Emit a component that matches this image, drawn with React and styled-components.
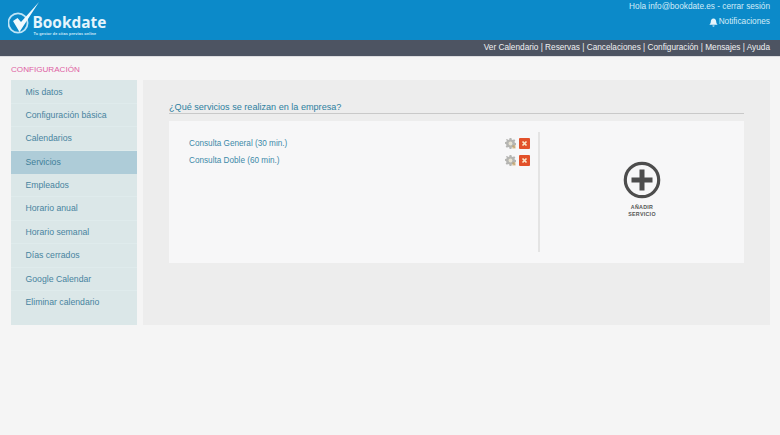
import React from "react";
import styled, { createGlobalStyle } from "styled-components";

const Global = createGlobalStyle`
  html, body { margin: 0; padding: 0; background: #f5f5f5; }
  body { font-family: "Liberation Sans", Arial, sans-serif; }
  * { box-sizing: border-box; }
`;
const Page = styled.div`width: 780px; height: 435px; overflow: hidden; background: #f5f5f5;`;
const TopBar = styled.header`
  height: 40px; background: #0c8ac9; display: flex; justify-content: space-between;
  padding: 0 10px 0 8px;
`;
const Logo = styled.div`display: flex; align-items: flex-start; position: relative; width: 110px;`;
const LogoMark = styled.svg`width: 36px; height: 36px; flex: none; margin-top: 0;`;
const LogoText = styled.div`
  position: absolute; left: 24.5px; top: 14px; display: flex; flex-direction: column; color: #eaf6fc;
`;
const LogoName = styled.span`font: 700 15.4px/18px "Open Sans", sans-serif; letter-spacing: 0; color: #e6f5fc;`;
const LogoTag = styled.span`
  font: bold 3.8px/4px "Liberation Sans", sans-serif; margin: 0 0 0 1px; white-space: nowrap; color: #d5edf9; letter-spacing: .12px;
`;
const UserBox = styled.div`
  display: flex; flex-direction: column; align-items: flex-end; color: #d3ecf8; font-size: 8.25px; padding-top: 2px; gap: 5px;
`;
const UserLine = styled.div`line-height: 10px; display: flex; align-items: center; gap: 1px;`;
const NavBar = styled.nav`
  height: 17px; background: #4d5462; color: #f0f1f3; font-size: 8.25px; line-height: 16px; text-align: right;
  padding-right: 10px; border-bottom: 1px solid #dcdde0;
`;
const SectionTitle = styled.h1`
  margin: 0; padding: 7px 0 0 11px; height: 23px; font: normal 8.1px/11px "Liberation Sans", sans-serif; color: #df5fa3;
`;
const Content = styled.div`display: flex; gap: 6px; padding: 0 10px 0 11px; height: 245px;`;
const Sidebar = styled.aside`width: 126px; background: #dbe7e8; padding-top: 0.5px;`;
const MenuItem = styled.div`
  height: 23.4px; line-height: 23px; padding-left: 14.5px; font-size: 8.7px;
  color: ${p => p.$active ? "#3f8099" : "#48849f"};
  background: ${p => p.$active ? "#aeccd8" : "transparent"};
  border-bottom: 1px solid ${p => p.$active ? "#aeccd8" : "#dfebec"};
  &:last-child { border-bottom: none; }
`;
const Main = styled.main`flex: 1; background: #ededed; padding: 20px 26px 0;`;
const Question = styled.h2`
  margin: 0 0 7px; height: 13px; font: normal 9.1px/14px "Liberation Sans", sans-serif; color: #2e7f9f;
  border-bottom: 1px solid #c9c9c9; box-sizing: content-box;
`;
const Card = styled.section`
  height: 142px; background: #f7f7f8; padding: 11px 0 0 20px; display: flex;
`;
const List = styled.div`width: 351px; height: 120px; border-right: 2px solid #e4e4e4; padding-top: 2.5px; flex: none;`;
const ServiceRow = styled.div`
  height: 17.5px; display: flex; align-items: center; justify-content: space-between; padding-right: 8px;
  font-size: 8.2px; color: #3d8aa8;
`;
const Icons = styled.div`display: flex; align-items: center; gap: 3px;`;
const AddBox = styled.div`flex: 1; display: flex; flex-direction: column; align-items: center; padding-top: 29px;`;
const AddLabel = styled.div`
  margin-top: 5px; font: bold 5.3px/7px "Liberation Sans", sans-serif; color: #555; text-align: center; letter-spacing: .3px;
`;

const Gear = () => (
  <svg width="11" height="11" viewBox="0 0 12 12">
    <path fill="#b5b5b2" d="M5 0h2l.3 1.7 1.2.5L10 1.3l1.3 1.4-1 1.4.5 1.2 1.7.3v2l-1.7.3-.5 1.2 1 1.4L10 10.7l-1.5-.9-1.2.5L7 12H5l-.3-1.7-1.2-.5-1.5.9L.7 9.3l1-1.4-.5-1.2L0 6.4v-2l1.5-.3.5-1.2-1-1.400L2.300 1 3.500 2.200 4.700 1.700z" />
    <circle cx="6" cy="6" r="2.100" fill="#e6e2d2" />
    <path fill="#c79a4a" d="M8 8h3.500v3.500H8z" opacity=".55" />
  </svg>
);
const Del = () => (
  <svg width="11" height="11" viewBox="0 0 11 11">
    <rect width="11" height="11" rx="1" fill="#e2512a" />
    <path d="M3.500 3.500l4 4m0-4l-4 4" stroke="#fbe6c8" strokeWidth="1.700" />
  </svg>
);
const Bell = () => (
  <svg width="9" height="9" viewBox="0 0 10 10">
    <path fill="#e6f5fc" d="M5 .5c2 0 3 1.500 3 3.500 0 1.800.8 2.600 1.500 3.500h-9C1.200 6.600 2 5.800 2 4 2 2 3 .5 5 .5zM3.800 8.300h2.400C6.100 9.200 5.600 9.600 5 9.600s-1.100-.4-1.200-1.300z" />
  </svg>
);
const items = ["Mis datos","Configuración básica","Calendarios","Servicios","Empleados","Horario anual","Horario semanal","Días cerrados","Google Calendar","Eliminar calendario"];

export default function App() {
  return (
    <Page>
      <Global />
      <TopBar>
        <Logo>
          <LogoMark viewBox="0 0 36 36">
            <circle cx="10" cy="23" r="9.600" fill="none" stroke="#bfe4f6" strokeWidth="1.800" />
            <path d="M5 21l6.500 11L31 2 13 22l-3.500-4z" fill="#f2fafe" />
          </LogoMark>
          <LogoText>
            <LogoName>Bookdate</LogoName>
            <LogoTag>Tu gestor de citas previas online</LogoTag>
          </LogoText>
        </Logo>
        <UserBox>
          <UserLine>Hola info@bookdate.es - cerrar sesión</UserLine>
          <UserLine><Bell />Notificaciones</UserLine>
        </UserBox>
      </TopBar>
      <NavBar>Ver Calendario | Reservas | Cancelaciones | Configuración | Mensajes | Ayuda</NavBar>
      <SectionTitle>CONFIGURACIÓN</SectionTitle>
      <Content>
        <Sidebar>
          {items.map(i => <MenuItem key={i} $active={i === "Servicios"}>{i}</MenuItem>)}
        </Sidebar>
        <Main>
          <Question>¿Qué servicios se realizan en la empresa?</Question>
          <Card>
            <List>
              {["Consulta General (30 min.)", "Consulta Doble (60 min.)"].map(s => (
                <ServiceRow key={s}>{s}<Icons><Gear /><Del /></Icons></ServiceRow>
              ))}
            </List>
            <AddBox>
              <svg width="38" height="38" viewBox="0 0 38 38">
                <circle cx="19" cy="19" r="16.700" fill="none" stroke="#4d4d4d" strokeWidth="3.200" />
                <path d="M19 8.500v21M8.500 19h21" stroke="#4d4d4d" strokeWidth="5" />
              </svg>
              <AddLabel>AÑADIR<br />SERVICIO</AddLabel>
            </AddBox>
          </Card>
        </Main>
      </Content>
    </Page>
  );
}
